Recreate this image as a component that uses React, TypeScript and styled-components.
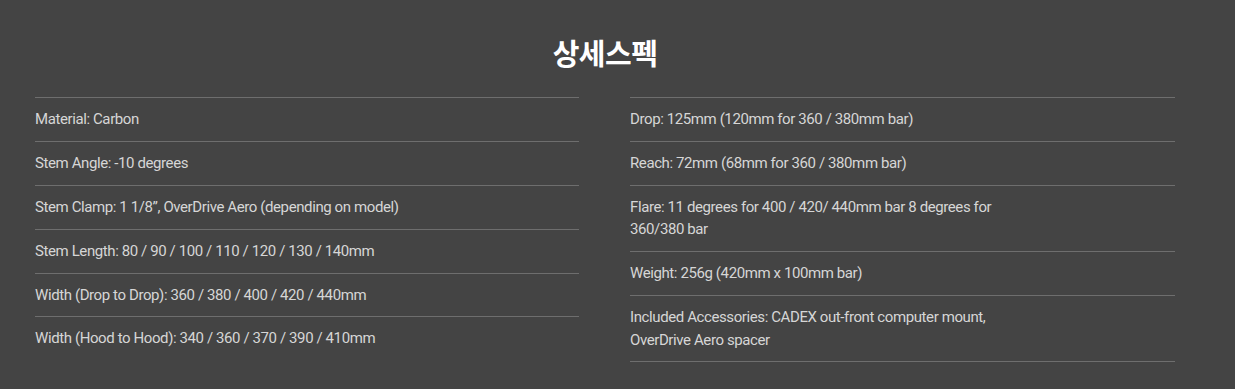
import styled, { createGlobalStyle } from "styled-components";
import React from "react";

const GlobalStyle = createGlobalStyle`
  html, body {
    margin: 0;
    padding: 0;
    background: #444444;
  }
`;

const Wrapper = styled.section`
  width: 1140px;
  padding: 29px 0 26px 35px;
  font-family: Roboto, "Noto Sans CJK KR", sans-serif;
`;
const Title = styled.h2`
  margin: 0 0 22px;
  text-align: center;
  color: #ffffff;
  font-family: "Noto Sans CJK KR", sans-serif;
  font-size: 29px;
  font-weight: 700;
  line-height: 46px;
  letter-spacing: -0.5px;
`;
const Columns = styled.div`
  display: grid;
  grid-template-columns: 544px 545px;
  column-gap: 51px;
  align-items: start;
`;
const SpecList = styled.ul<{ $closed?: boolean }>`
  list-style: none;
  margin: 0;
  padding: 0;
  border-bottom: ${(p) => (p.$closed ? "1px solid #6e6e6e" : "none")};
`;
const SpecItem = styled.li`
  border-top: 1px solid #6e6e6e;
  padding: 10px 0 10.4px;
  color: #d6d6d6;
  font-size: 15px;
  line-height: 22.5px;
  letter-spacing: -0.4px;
`;
const SpecText = styled.span`
  display: block;
  max-width: 380px;
`;

const left = [
  "Material: Carbon",
  "Stem Angle: -10 degrees",
  "Stem Clamp: 1 1/8\u201d, OverDrive Aero (depending on model)",
  "Stem Length: 80 / 90 / 100 / 110 / 120 / 130 / 140mm",
  "Width (Drop to Drop): 360 / 380 / 400 / 420 / 440mm",
  "Width (Hood to Hood): 340 / 360 / 370 / 390 / 410mm",
];
const right = [
  "Drop: 125mm (120mm for 360 / 380mm bar)",
  "Reach: 72mm (68mm for 360 / 380mm bar)",
  "Flare: 11 degrees for 400 / 420/ 440mm bar 8 degrees for 360/380 bar",
  "Weight: 256g (420mm x 100mm bar)",
  "Included Accessories: CADEX out-front computer mount, OverDrive Aero spacer",
];

function App() {
  return (
    <>
      <GlobalStyle />
      <Wrapper>
        <Title>상세스펙</Title>
        <Columns>
          <SpecList>
            {left.map((t) => (
              <SpecItem key={t}>
                <SpecText>{t}</SpecText>
              </SpecItem>
            ))}
          </SpecList>
          <SpecList $closed>
            {right.map((t) => (
              <SpecItem key={t}>
                <SpecText>{t}</SpecText>
              </SpecItem>
            ))}
          </SpecList>
        </Columns>
      </Wrapper>
    </>
  );
}

export default App;
